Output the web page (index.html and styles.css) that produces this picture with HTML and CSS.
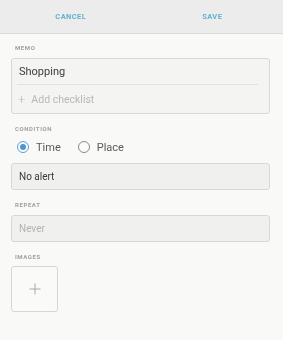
FILE: index.html
```html
<!DOCTYPE html>
<html>
<head>
<meta charset="utf-8">
<link rel="stylesheet" href="styles.css">
</head>
<body>
<div class="page">
<div class="header">
  <div class="hbtn">CANCEL</div>
  <div class="hbtn">SAVE</div>
</div>
<div class="content">
  <div class="label label-first">MEMO</div>
  <div class="memo">
    <div class="memo-title">Shopping</div>
    <div class="divider"></div>
    <div class="memo-check"><span class="plus">+</span><span>Add checklist</span></div>
  </div>

  <div class="label">CONDITION</div>
  <div class="radios">
    <div class="radio-item"><span class="radio checked"></span><span>Time</span></div>
    <div class="radio-item"><span class="radio"></span><span>Place</span></div>
  </div>
  <div class="field dark">No alert</div>

  <div class="label">REPEAT</div>
  <div class="field muted">Never</div>

  <div class="label">IMAGES</div>
  <div class="imgbox">
    <svg width="12" height="12" viewBox="0 0 12 12"><path d="M6 0.5V11.5M0.5 6H11.5" stroke="#a8a8a8" stroke-width="1" fill="none"/></svg>
  </div>
</div>
</div>
</body>
</html>
```
FILE: styles.css
```css
html, body {
  margin: 0;
  padding: 0;
}
body {
  background: #f9f9f7;
  font-family: Roboto, "Liberation Sans", sans-serif;
}
.page {
  width: 283px;
  height: 340px;
  background: #f9f9f7;
  overflow: hidden;
  filter: blur(0.45px);
}
.header {
  height: 33px;
  background: #ececec;
  border-bottom: 1px solid #dcdcdc;
  display: flex;
}
.hbtn {
  flex: 1;
  display: flex;
  align-items: center;
  justify-content: center;
  font-size: 7.5px;
  font-weight: 700;
  letter-spacing: 0.4px;
  color: #5fb3cf;
}
.content {
  padding: 0 13px 0 11px;
}
.label {
  font-size: 6px;
  font-weight: 700;
  letter-spacing: 0.6px;
  color: #a0a0a0;
  line-height: 8px;
  padding-left: 4px;
  margin-top: 11px;
  margin-bottom: 6px;
}
.label-first {
  margin-top: 10px;
}
.memo {
  border: 1px solid #d8d8d6;
  border-radius: 3px;
  background: #f4f4f2;
}
.memo-title {
  height: 25px;
  display: flex;
  align-items: center;
  padding-left: 7px;
  font-size: 11px;
  color: #3c3c3c;
}
.divider {
  height: 1px;
  background: #e2e2e0;
  margin: 0 11px 0 5px;
}
.memo-check {
  height: 28px;
  display: flex;
  align-items: center;
  padding-left: 6px;
  gap: 6px;
  font-size: 10.5px;
  color: #b8b8b8;
}
.plus {
  font-size: 13px;
  font-weight: 300;
  color: #bbbbbb;
}
.radios {
  display: flex;
  align-items: center;
  height: 16px;
  margin-top: 0;
  margin-bottom: 8px;
  padding-left: 6px;
  gap: 17px;
  font-size: 11px;
  color: #5a5a5a;
}
.radio-item {
  display: flex;
  align-items: center;
  gap: 7px;
}
.radio {
  width: 10px;
  height: 10px;
  border: 1px solid #8a8a8a;
  border-radius: 50%;
  display: flex;
  align-items: center;
  justify-content: center;
  background: #fbfbfb;
}
.radio.checked {
  border-color: #5b9fd6;
}
.radio.checked::after {
  content: "";
  width: 6px;
  height: 6px;
  border-radius: 50%;
  background: #4d93cf;
}
.field {
  height: 25px;
  border: 1px solid #d8d8d6;
  border-radius: 3px;
  background: #f0f0ee;
  display: flex;
  align-items: center;
  padding-left: 7px;
  font-size: 10px;
}
.field.dark {
  color: #3c3c3c;
}
.field.muted {
  color: #b3b3b3;
}
.imgbox {
  width: 45px;
  height: 44px;
  border: 1px solid #d6d6d4;
  border-radius: 3px;
  background: #fafaf8;
  display: flex;
  align-items: center;
  justify-content: center;
  margin-top: -1px;
}
```
